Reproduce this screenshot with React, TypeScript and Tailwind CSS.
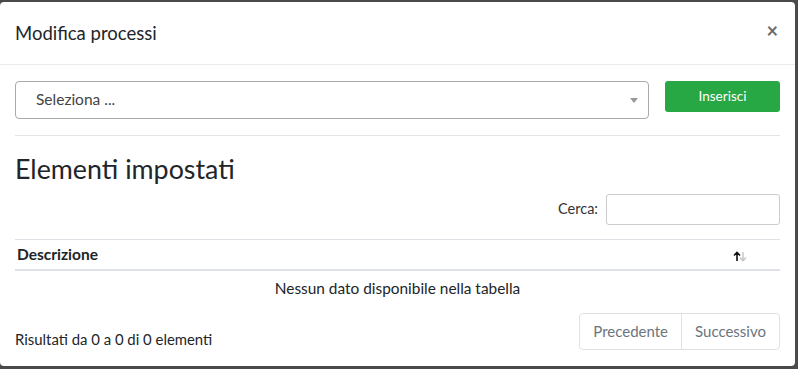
import React from 'react';

const font = { fontFamily: 'Lato, "Noto Sans", sans-serif' };

export default function App() {
  return (
    <div className="w-[798px] h-[369px] bg-[#4a4a4a] pt-[2px] pr-[3px] pb-[3px]" style={font}>
      <div className="h-full bg-white rounded-[4px] text-[#212529] flex flex-col">
        {/* header */}
        <div className="h-[63px] flex items-center justify-between pl-[15px] pr-[17px] border-b border-[#e9ecef]">
          <h4 className="text-[18.5px] leading-none">Modifica processi</h4>
          <span className="text-[20px] font-bold text-[#6c6c6c] leading-none mb-[6px]">×</span>
        </div>

        {/* body */}
        <div className="px-[15px] pt-[16px] flex flex-col">
          <div className="flex items-start gap-[16px]">
            <div className="flex-1 h-[38px] border border-[#aaa] rounded-[4px] flex items-center justify-between pl-[20px] pr-[10px]">
              <span className="text-[15.5px] text-[#444]">Seleziona ...</span>
              <span className="w-0 h-0 border-x-[4px] border-x-transparent border-t-[5px] border-t-[#999]" />
            </div>
            <button className="w-[115px] h-[31px] bg-[#28a745] rounded-[3px] text-white text-[13.5px]">Inserisci</button>
          </div>

          <div className="mt-[16px] border-t border-[#e5e5e5]" />

          <h3 className="mt-[20px] text-[26.8px] leading-none text-[#212529]">Elementi impostati</h3>

          <div className="mt-[11px] flex items-center justify-end gap-[8px]">
            <span className="text-[14.5px] text-[#333]">Cerca:</span>
            <div className="w-[174px] h-[31px] border border-[#ccc] rounded-[3px]" />
          </div>

          <div className="mt-[14px] border-t border-[#dee2e6]">
            <div className="h-[31px] flex items-center justify-between border-b-2 border-[#dee2e6] pl-[2px] pr-[33px]">
              <span className="text-[15.5px] font-bold">Descrizione</span>
              <svg width="14" height="11" viewBox="0 0 14 11" className="mt-[4px]">
                <path d="M4 10V1.5M1 4.5L4 1.3L7 4.5" stroke="#111" strokeWidth="1.6" fill="none" />
                <path d="M10 1v8.5M7 6.5L10 9.7L13 6.5" stroke="#c4c4c4" strokeWidth="1.4" fill="none" />
              </svg>
            </div>
            <div className="h-[36px] flex items-center justify-center text-[15.4px]">
              Nessun dato disponibile nella tabella
            </div>
          </div>

          <div className="mt-[6px] flex items-start justify-between">
            <span className="text-[14.9px] mt-[15px]">Risultati da 0 a 0 di 0 elementi</span>
            <div className="flex h-[37px] border border-[#dee2e6] rounded-[4px] text-[15px] text-[#6c757d]">
              <span className="px-[13px] flex items-center border-r border-[#dee2e6]">Precedente</span>
              <span className="px-[13px] flex items-center">Successivo</span>
            </div>
          </div>
        </div>
      </div>
    </div>
  );
}
